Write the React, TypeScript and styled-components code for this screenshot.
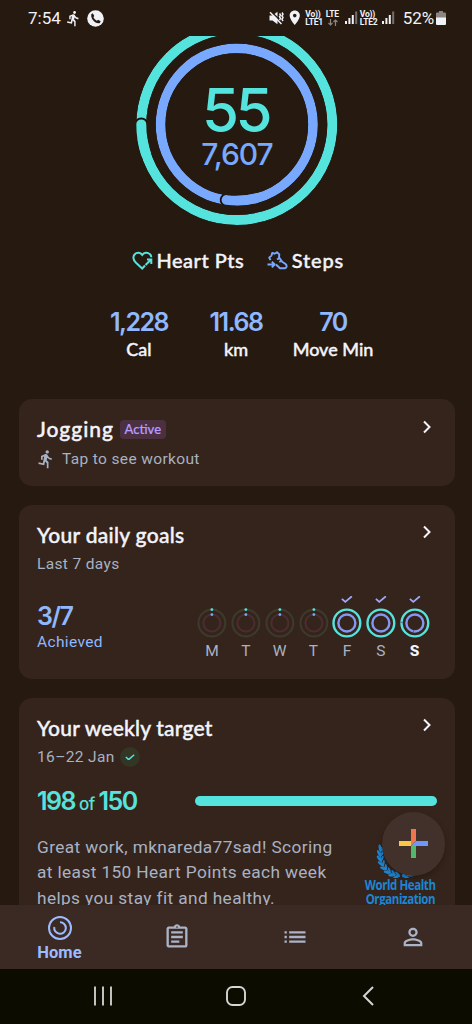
import React from "react";
import styled, { createGlobalStyle } from "styled-components";
import {
  MdDirectionsRun,
  MdList,
  MdLocationOn,
  MdOutlineAssignment,
  MdPersonOutline,
} from "react-icons/md";

const c = {
  bg: "#261a10",
  card: "#35241b",
  nav: "#3b2923",
  system: "#0c0c01",
  teal: "#55e3de",
  blue: "#78a9ff",
  value: "#8fb8ff",
  text: "#f3f4fb",
  muted: "#a8b2c3",
  partner: "#1b86d6",
};

const GlobalStyle = createGlobalStyle`
  * { box-sizing: border-box; }
  body { margin: 0; background: ${c.bg}; }
`;

const Screen = styled.div`
  width: 472px;
  height: 1024px;
  display: flex;
  flex-direction: column;
  overflow: hidden;
  position: relative;
  background: ${c.bg};
  color: ${c.text};
  font-family: Roboto, "Liberation Sans", sans-serif;
  white-space: nowrap;
`;

const StatusBar = styled.header`
  flex: 0 0 36px;
  display: flex;
  justify-content: space-between;
  padding: 0 26px 0 28px;
`;

const StatusGroup = styled.div<{ $gap?: number }>`
  display: flex;
  align-items: center;
  gap: ${(p) => p.$gap ?? 0}px;
  color: #f1f2f8;
  svg { display: block; flex: none; }
`;

const StatusText = styled.span`
  font-size: 17px;
  line-height: 36px;
`;

const BatteryText = styled(StatusText)`
  margin-left: 6px;
  letter-spacing: -0.1px;
`;

const NetworkLabel = styled.span<{ $w: number }>`
  display: flex;
  flex-direction: column;
  width: ${(p) => p.$w}px;
  font-size: 8.5px;
  font-weight: 700;
  line-height: 8px;
  letter-spacing: -0.2px;
  svg { margin: 1px auto 0 2px; }
`;

const Content = styled.main`
  flex: 0 0 869px;
  overflow: hidden;
`;

const Hero = styled.section`
  height: 363px;
  display: flex;
  flex-direction: column;
  align-items: center;
`;

const RingBox = styled.div`
  display: grid;
  width: 202px;
  height: 190px;
  margin-left: 2px;
  > * { grid-area: 1 / 1; }
`;

const RingLabels = styled.div`
  display: flex;
  flex-direction: column;
  align-items: center;
  padding-top: 39px;
  font-family: Inter, sans-serif;
  font-weight: 500;
`;

const HeartPoints = styled.span`
  font-size: 60px;
  line-height: 64px;
  padding-top: 3px;
  letter-spacing: -3.5px;
  margin-right: 3px;
  color: ${c.teal};
`;

const StepCount = styled.span`
  font-size: 30px;
  line-height: 30px;
  margin-top: -3px;
  letter-spacing: -1px;
  color: ${c.blue};
`;

const Legend = styled.div`
  display: flex;
  width: 212px;
  margin: 22px 0 0 4px;
  height: 24px;
  justify-content: space-between;
`;

const LegendItem = styled.div<{ $ls: number }>`
  display: flex;
  align-items: center;
  gap: 3.5px;
  font: 500 20px/24px Lato, sans-serif;
  letter-spacing: ${(p) => p.$ls}px;
  -webkit-text-stroke: 0.4px currentColor;
  svg { -webkit-text-stroke: 0; }
`;

const Stats = styled.div`
  display: flex;
  margin-top: 34px;
`;

const Stat = styled.div`
  width: 97px;
  display: flex;
  flex-direction: column;
  align-items: center;
`;

const StatValue = styled.span`
  font: 600 25px/32px Inter, sans-serif;
  letter-spacing: -1.5px;
  color: ${c.value};
`;

const StatLabel = styled.span`
  font: 500 18px/22px Lato, sans-serif;
  -webkit-text-stroke: 0.4px currentColor;
`;

const Card = styled.section<{ $h: number }>`
  height: ${(p) => p.$h}px;
  margin: 0 17.5px 18.5px 18.5px;
  padding: 17px 18px 0 18.5px;
  border-radius: 13px;
  background: ${c.card};
`;

const CardHead = styled.div`
  display: flex;
  height: 26px;
  align-items: center;
`;

const CardTitle = styled.h2<{ $ls?: number }>`
  margin: 0;
  font: 500 21px/26px Lato, sans-serif;
  letter-spacing: ${(p) => p.$ls ?? 0.3}px;
  -webkit-text-stroke: 0.4px currentColor;
`;

const Badge = styled.span`
  margin: 1px 0 0 6px;
  width: 46px;
  text-align: center;
  border-radius: 4px;
  background: #4a3041;
  color: #b99cff;
  font: 500 13px/19px Lato, sans-serif;
  -webkit-text-stroke: 0.2px currentColor;
`;

const ChevronIcon = styled.svg`
  margin: -5px 5px 0 auto;
`;

const Subtitle = styled.div`
  display: flex;
  align-items: center;
  height: 20px;
  margin-top: 6.5px;
  font-size: 15.5px;
  letter-spacing: 0.36px;
  color: ${c.muted};
`;

const RunMark = styled(MdDirectionsRun)`
  margin: 0 6px 0 -1px;
`;

const TargetMet = styled.span`
  display: grid;
  place-items: center;
  width: 20px;
  height: 20px;
  margin-left: 5px;
  border-radius: 50%;
  background: #333624;
`;

const GoalsRow = styled.div`
  display: flex;
  justify-content: space-between;
  margin-top: 21.5px;
`;

const Achieved = styled.div`
  display: flex;
  flex-direction: column;
  padding-top: 6.5px;
  color: ${c.value};
`;

const AchievedCount = styled.span`
  font: 600 25px/28px Inter, sans-serif;
  letter-spacing: -1.5px;
`;

const AchievedLabel = styled.span`
  font-size: 15.5px;
  line-height: 24px;
  letter-spacing: 0.35px;
`;

const Week = styled.div`
  display: flex;
  margin-right: 5px;
`;

const Day = styled.div<{ $today?: boolean }>`
  width: 33.75px;
  display: flex;
  flex-direction: column;
  align-items: center;
  font-size: 15.5px;
  font-weight: ${(p) => (p.$today ? 800 : 400)};
  line-height: 20px;
  color: ${(p) => (p.$today ? c.text : c.muted)};
`;

const TargetRow = styled.div`
  display: flex;
  align-items: center;
  justify-content: space-between;
  height: 30px;
  margin-top: 18.5px;
`;

const TargetText = styled.div`
  padding-top: 3px;
  font: 600 25px/30px Inter, sans-serif;
  letter-spacing: -1.5px;
  color: ${c.teal};
  small { font-size: 17px; font-weight: 500; letter-spacing: -0.7px; margin: 0 4px; }
`;

const TargetBar = styled.div`
  width: 242px;
  height: 10px;
  border-radius: 5px;
  background: ${c.teal};
`;

const MessageRow = styled.div`
  display: flex;
  justify-content: space-between;
  margin-top: 19px;
`;

const Message = styled.p`
  margin: 0;
  font-size: 17.3px;
  line-height: 25.5px;
  letter-spacing: 0.38px;
  color: ${c.muted};
`;

const Partner = styled.div`
  width: 72px;
  padding-top: 4px;
  display: flex;
  flex-direction: column;
  align-items: center;
`;

const PartnerName = styled.span`
  font: 700 14px/14px "Open Sans", sans-serif;
  letter-spacing: -0.5px;
  color: ${c.partner};
  transform: scaleX(0.82);
`;

const Fab = styled.button`
  position: absolute;
  left: 381.5px;
  top: 812px;
  width: 63.5px;
  height: 63.5px;
  padding: 0;
  border: 0;
  border-radius: 50%;
  background: #42302a;
  box-shadow: 0 3px 6px rgba(0, 0, 0, 0.25);
  display: grid;
  place-items: center;
`;

const TabBar = styled.nav`
  flex: 0 0 64px;
  display: grid;
  grid-template-columns: repeat(4, 118px);
  background: ${c.nav};
  color: #aab4c6;
`;

const Tab = styled.div<{ $active?: boolean }>`
  display: flex;
  flex-direction: column;
  align-items: center;
  justify-content: center;
  gap: 1px;
  padding: ${(p) => (p.$active ? "4px 0 0 1px" : "0")};
  color: ${(p) => (p.$active ? "#9dbcff" : "inherit")};
  font-size: 16.5px;
  font-weight: 700;
  line-height: 22px;
  letter-spacing: 0.1px;
`;

const SystemBar = styled.footer`
  flex: 1;
  background: ${c.system};
  display: flex;
  justify-content: space-between;
  align-items: center;
  padding: 0 98px 2px 93px;
`;

const Signal = () => (
  <svg width="13" height="14" viewBox="0 0 13 14">
    <rect x="0" y="10" width="2" height="3" fill="#f1f2f8" />
    <rect x="3.4" y="7" width="2" height="6" fill="#f1f2f8" />
    <rect x="6.8" y="4" width="2" height="9" fill="#f1f2f8" />
    <rect x="10.2" y="0.5" width="2" height="12.5" fill="#776f6b" />
  </svg>
);

const Chevron = () => (
  <ChevronIcon width="10" height="14" viewBox="0 0 10 14" fill="none">
    <path d="M2 1.5 7.5 7 2 12.5" stroke={c.text} strokeWidth="2" />
  </ChevronIcon>
);

const Check = ({ color, size = 12 }: { color: string; size?: number }) => (
  <svg width={size} height={(size * 8) / 12} viewBox="0 0 12 8" fill="none">
    <path d="M1 3.6 4.4 6.8 11 0.9" stroke={color} strokeWidth="1.8" />
  </svg>
);

const ProgressRings = () => (
  <svg width="202" height="190" viewBox="136 36 202 190" fill="none">
    <circle cx="236.8" cy="124.5" r="95.5" stroke={c.teal} strokeWidth="10" />
    <path d="M141.3 124.4A95.5 95.5 0 0 0 142 134" stroke="#1b130e" strokeWidth="14" strokeLinecap="round" />
    <circle cx="236.8" cy="124.5" r="101.5" stroke={c.bg} strokeWidth="2" />
    <circle cx="236.8" cy="124.5" r="89" stroke={c.bg} strokeWidth="3" />
    <path d="M141.3 124.4A95.5 95.5 0 0 0 146 154" stroke={c.teal} strokeWidth="10" strokeLinecap="round" />
    <circle cx="236.8" cy="124.5" r="76.2" stroke={c.blue} strokeWidth="9.8" />
    <path d="M226.5 200A76.2 76.2 0 0 0 232 200.6" stroke="#1b130e" strokeWidth="13.5" strokeLinecap="round" />
    <circle cx="236.8" cy="124.5" r="82.6" stroke={c.bg} strokeWidth="3" />
    <circle cx="236.8" cy="124.5" r="69.8" stroke={c.bg} strokeWidth="3" />
    <path d="M226.5 200A76.2 76.2 0 0 0 256 198.2" stroke={c.blue} strokeWidth="9.8" strokeLinecap="round" />
  </svg>
);

const DayRings = ({ done, today }: { done: boolean; today?: boolean }) => (
  <svg width="33.75" height="45" viewBox="-16.875 -27 33.75 45" fill="none">
    {done && <path d="M-5-24.2-1.6-21.1 5-26.7" stroke="#a0a9f5" strokeWidth="1.8" />}
    <circle r="13.4" stroke={done ? c.teal : "#3b3a2c"} strokeWidth={done ? 2.4 : 2.1} />
    <circle r="8.5" stroke={done ? "#8498f2" : "#4a2d31"} strokeWidth={done ? 2.4 : 2.1} />
    {!done && <circle cy="-13.4" r="1.4" fill={c.teal} />}
    {!done && <circle cy="-8.4" r="1.4" fill={c.blue} />}
    {today && <path d="M-1.5 7.2v2.6M-14.5-.7h2.4" stroke="#5a5a78" strokeWidth="0.9" />}
  </svg>
);

const HeartIcon = () => (
  <svg width="21" height="21" viewBox="0 0 21 21" fill="none" stroke={c.teal} strokeWidth="2">
    <path d="M13 15.500 10.200 18.500 4 12.800C.8 9.700.800 6.200 2.800 4.200 4.900 2.100 8.400 2.400 10.200 4.900 12 2.400 15.600 2 17.800 4.100c1 .9 1.500 2.100 1.500 3.200" />
    <path d="m13.500 15 5.400-5.300M15 9.600h4.300v4.300" />
  </svg>
);

const ShoeIcon = () => (
  <svg width="21" height="21" viewBox="0 0 21 21" fill="none" stroke={c.blue} strokeWidth="1.9" strokeLinejoin="round">
    <path d="M3.500 10.200 2.200 7.600 4.500 5.600 5.200 3 7.500 3.700 10 2.200 12.300 4.400 12 7.400 15.200 11.800 18.500 14C20.200 15.300 20 18 18 18.200H13L9 14.500" />
    <path d="M10 9.500 12.500 8.200M12.300 12 14.500 10.700M.5 14.500h6.500M4.800 11.600 7.700 14.500 4.800 17.400" />
  </svg>
);

const leafAngles = [200, 186, 172, 158, 144, 130, 116, 103];

const Emblem = () => (
  <svg width="56" height="39" viewBox="-28 -20 56 39" fill="none">
    {[1, -1].map((side) => (
      <g key={side} transform={`translate(0 -4) scale(${side} 1)`} fill={c.partner}>
        <path d="M-19.500-8A21 21 0 0 0-3 20.500" stroke={c.partner} strokeWidth="1" fill="none" />
        {leafAngles.map((a) => (
          <g key={a} transform={`rotate(${a}) translate(21 0)`}>
            <ellipse cx="1.300" cy="0" rx="1.300" ry="3.600" transform="rotate(-28)" />
            <ellipse cx="-2" cy="0" rx="1.100" ry="3.200" transform="rotate(30)" />
          </g>
        ))}
      </g>
    ))}
  </svg>
);

const VolumeOff = () => (
  <svg width="15" height="14" viewBox="0 0 14 14">
    <path d="M0 4.500h3L8 .8v12.400L3 9.500H0Z" fill="#f1f2f8" />
    <path d="M1.500.500 13.500 12" stroke={c.bg} strokeWidth="1.500" />
    <path d="M.5 1.200 12 13M10 2.500l1 1.500-1 1.700 1 1.600-1 1.700M12.500 1.500l1 1.700-1 1.700 1 1.700-1 1.700 1 1.700" stroke="#f1f2f8" strokeWidth="1.500" fill="none" />
  </svg>
);

const PhoneBadge = () => (
  <svg width="17" height="17" viewBox="0 0 17 17">
    <circle cx="8.5" cy="8.5" r="8.3" fill="#f1f2f8" />
    <path d="M4.300 4.200 5.800 3.300 7.300 6 6.400 7.200C7.200 8.800 8.200 9.900 9.900 10.700L11.100 9.700 13.700 11.300 12.800 13C8.500 14.200 3.400 9 4.300 4.200Z" fill={c.bg} />
  </svg>
);

const Battery = () => (
  <svg width="10" height="14" viewBox="0 0 10 14">
    <path d="M3 0h4v1.500h2q1 0 1 1V7H0V2.500q0-1 1-1h2Z" fill="#8a8583" />
    <path d="M0 6.500h10V13q0 1-1 1H1q-1 0-1-1Z" fill="#f1f2f8" />
  </svg>
);

const days = ["M", "T", "W", "T", "F", "S", "S"];

export default function App() {
  return (
    <Screen>
      <GlobalStyle />
      <StatusBar>
        <StatusGroup $gap={4.5}>
          <StatusText>7:54</StatusText>
          <MdDirectionsRun size={17} />
          <PhoneBadge />
        </StatusGroup>
        <StatusGroup $gap={2}>
          <VolumeOff />
          <MdLocationOn size={17.5} />
          <NetworkLabel $w={18.5}><span>Vo))</span><span>LTE1</span></NetworkLabel>
          <NetworkLabel $w={17}>
            <span>LTE</span>
            <svg width="10" height="7" viewBox="0 0 10 7" fill="none" stroke="#8d8580" strokeWidth="1.2">
              <path d="M2.500 0v6M.5 4l2 2 2-2M7.500 7V1M5.500 3l2-2 2 2" />
            </svg>
          </NetworkLabel>
          <Signal />
          <NetworkLabel $w={20}><span>Vo))</span><span>LTE2</span></NetworkLabel>
          <Signal />
          <BatteryText>52%</BatteryText>
          <Battery />
        </StatusGroup>
      </StatusBar>

      <Content>
        <Hero>
          <RingBox>
            <ProgressRings />
            <RingLabels>
              <HeartPoints>55</HeartPoints>
              <StepCount>7,607</StepCount>
            </RingLabels>
          </RingBox>
          <Legend>
            <LegendItem $ls={0.5}><HeartIcon />Heart Pts</LegendItem>
            <LegendItem $ls={0.8}><ShoeIcon />Steps</LegendItem>
          </Legend>
          <Stats>
            <Stat><StatValue>1,228</StatValue><StatLabel>Cal</StatLabel></Stat>
            <Stat><StatValue>11.68</StatValue><StatLabel>km</StatLabel></Stat>
            <Stat><StatValue>70</StatValue><StatLabel>Move Min</StatLabel></Stat>
          </Stats>
        </Hero>

        <Card $h={87}>
          <CardHead><CardTitle $ls={0.95}>Jogging</CardTitle><Badge>Active</Badge><Chevron /></CardHead>
          <Subtitle><RunMark size={20} />Tap to see workout</Subtitle>
        </Card>

        <Card $h={174.5}>
          <CardHead><CardTitle>Your daily goals</CardTitle><Chevron /></CardHead>
          <Subtitle>Last 7 days</Subtitle>
          <GoalsRow>
            <Achieved>
              <AchievedCount>3/7</AchievedCount>
              <AchievedLabel>Achieved</AchievedLabel>
            </Achieved>
            <Week>
              {days.map((d, i) => (
                <Day key={i} $today={i === 6}>
                  <DayRings done={i > 3} today={i === 6} />
                  {d}
                </Day>
              ))}
            </Week>
          </GoalsRow>
        </Card>

        <Card $h={260}>
          <CardHead><CardTitle $ls={0.2}>Your weekly target</CardTitle><Chevron /></CardHead>
          <Subtitle>16–22 Jan<TargetMet><Check color={c.teal} size={10} /></TargetMet></Subtitle>
          <TargetRow>
            <TargetText>198<small>of</small>150</TargetText>
            <TargetBar />
          </TargetRow>
          <MessageRow>
            <Message>
              Great work, mknareda77sad! Scoring<br />
              at least 150 Heart Points each week<br />
              helps you stay fit and healthy.
            </Message>
            <Partner>
              <Emblem />
              <PartnerName>World Health</PartnerName>
              <PartnerName>Organization</PartnerName>
            </Partner>
          </MessageRow>
        </Card>
      </Content>

      <TabBar>
        <Tab $active>
          <svg width="26" height="26" viewBox="0 0 26 26" fill="none" stroke="currentColor" strokeWidth="2">
            <circle cx="13" cy="13" r="11" />
            <path d="M13 7.200A5.800 5.800 0 1 1 7.300 12" />
          </svg>
          Home
        </Tab>
        <Tab><MdOutlineAssignment size={28} /></Tab>
        <Tab><MdList size={28} /></Tab>
        <Tab><MdPersonOutline size={28} /></Tab>
      </TabBar>

      <SystemBar>
        <svg width="20" height="20" viewBox="0 0 20 20" stroke="#d5d5d3" strokeWidth="1.8">
          <path d="M2 .5v19M10 .5v19M18 .5v19" />
        </svg>
        <svg width="23" height="20" viewBox="0 0 23 20" fill="none" stroke="#d5d5d3" strokeWidth="1.9">
          <rect x="1" y="1" width="18" height="18" rx="5.5" />
        </svg>
        <svg width="12" height="20" viewBox="0 0 12 20" fill="none" stroke="#d5d5d3" strokeWidth="2">
          <path d="M11 1 2 10l9 9" />
        </svg>
      </SystemBar>

      <Fab aria-label="Add">
        <svg width="29" height="29" viewBox="0 0 29 29">
          <path d="M12 0h5v12l-5 5Z" fill="#f0764d" />
          <path d="M0 12h12v5H0Z" fill="#f9c846" />
          <path d="M12 17h5v12h-5Z" fill="#53b76c" />
          <path d="M17 12h12v5H12Z" fill="#6b98fa" />
        </svg>
      </Fab>
    </Screen>
  );
}
